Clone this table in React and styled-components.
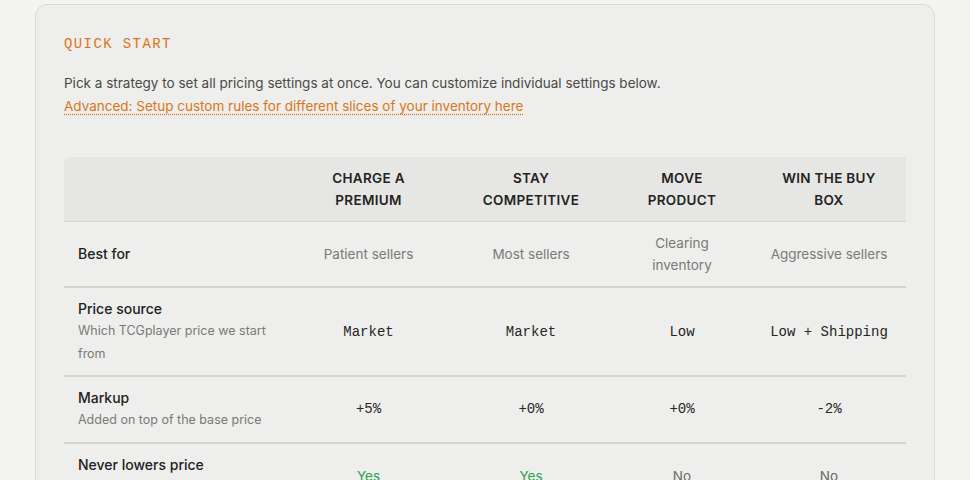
import React from 'react';
import styled, { createGlobalStyle } from 'styled-components';

// -- Global
const GlobalStyle = createGlobalStyle`
  body {
    margin: 0;
    background: #f4f4f2;
    font-family: Inter, "Liberation Sans", sans-serif;
    color: #222;
  }
`;

// -- Styled components
const Page = styled.div`
  padding: 4px 35px 0;
`;

const Card = styled.section`
  width: 900px;
  box-sizing: border-box;
  background: #eeeeec;
  border: 1px solid #d9d9d6;
  border-radius: 12px;
  padding: 31px 28px 40px;
`;

const Eyebrow = styled.h3`
  margin: 0;
  font-family: "Liberation Mono", "DejaVu Sans Mono", monospace;
  font-weight: 400;
  font-size: 14px;
  line-height: 17px;
  letter-spacing: 1.4px;
  color: #d9761a;
`;

const Intro = styled.p`
  margin: 19px 0 0;
  font-size: 13.5px;
  line-height: 23px;
  color: #4a4a48;
`;

const AdvancedLink = styled.a`
  display: inline-block;
  font-size: 13.5px;
  line-height: 23px;
  color: #d9761a;
  text-decoration: underline dotted;
  text-underline-offset: 3px;
  cursor: pointer;
`;

const Table = styled.div`
  margin-top: 39px;
  display: grid;
  grid-template-columns: 223px 163px 162px 140px 154px;
`;

const HeadCell = styled.div`
  background: #e6e6e4;
  border-bottom: 1px solid #d3d3d0;
  padding: 10px 14px;
  min-height: 44px;
  display: flex;
  align-items: center;
  justify-content: center;
  text-align: center;
  font-size: 13.5px;
  font-weight: 600;
  line-height: 22px;
  letter-spacing: 0.3px;
  text-transform: uppercase;
  color: #232322;
  &:first-child {
    border-top-left-radius: 8px;
  }
  &:last-child {
    border-top-right-radius: 8px;
  }
`;

const Cell = styled.div`
  padding: 10px 14px;
  border-bottom: 2px solid ${({ $last }) => ($last ? 'transparent' : '#d3d3d0')};
  display: flex;
  flex-direction: column;
  justify-content: center;
  align-items: ${({ $label }) => ($label ? 'flex-start' : 'center')};
  text-align: ${({ $label }) => ($label ? 'left' : 'center')};
`;

const Label = styled.div`
  font-size: 14px;
  font-weight: 500;
  line-height: 22px;
  color: #222;
`;

const Hint = styled.div`
  font-size: 12.5px;
  line-height: 22.5px;
  color: #7a7a77;
`;

const Soft = styled.div`
  font-size: 13.5px;
  line-height: 22px;
  color: #7a7a77;
`;

const Mono = styled.div`
  font-family: "Liberation Mono", "DejaVu Sans Mono", monospace;
  font-size: 14px;
  line-height: 22px;
  color: #262625;
`;

const Flag = styled.div`
  font-size: 13.5px;
  line-height: 22px;
  color: ${({ $on }) => ($on ? '#2aa152' : '#6b6b68')};
`;
//---------------------------------------

const strategies = ['Charge a premium', 'Stay competitive', 'Move product', 'Win the buy box'];

const rows = [
  { label: 'Best for', kind: 'soft', values: ['Patient sellers', 'Most sellers', 'Clearing inventory', 'Aggressive sellers'] },
  { label: 'Price source', hint: 'Which TCGplayer price we start from', kind: 'mono', values: ['Market', 'Market', 'Low', 'Low + Shipping'] },
  { label: 'Markup', hint: 'Added on top of the base price', kind: 'mono', values: ['+5%', '+0%', '+0%', '-2%'] },
  { label: 'Never lowers price', hint: 'Only ever raises your listing', kind: 'flag', values: [true, true, false, false], last: true },
];

const renderValue = (kind, value) => {
  if (kind === 'mono') return <Mono>{value}</Mono>;
  if (kind === 'flag') return <Flag $on={value}>{value ? 'Yes' : 'No'}</Flag>;
  if (value === 'Clearing inventory') return <Soft>Clearing<br />inventory</Soft>;
  return <Soft>{value}</Soft>;
};

const App = () => (
  <>
    <GlobalStyle />
    <Page>
      <Card>
        <Eyebrow>QUICK START</Eyebrow>
        <Intro>
          Pick a strategy to set all pricing settings at once. You can customize individual settings below.
          <br />
          <AdvancedLink>Advanced: Setup custom rules for different slices of your inventory here</AdvancedLink>
        </Intro>
        <Table>
          <HeadCell />
          {strategies.map((name) => (
            <HeadCell key={name}>{name}</HeadCell>
          ))}
          {rows.map((row) => (
            <React.Fragment key={row.label}>
              <Cell $label $last={row.last}>
                <Label>{row.label}</Label>
                {row.hint && <Hint>{row.hint}</Hint>}
              </Cell>
              {row.values.map((value, i) => (
                <Cell key={i} $last={row.last}>
                  {renderValue(row.kind, value)}
                </Cell>
              ))}
            </React.Fragment>
          ))}
        </Table>
      </Card>
    </Page>
  </>
);

export default App;
